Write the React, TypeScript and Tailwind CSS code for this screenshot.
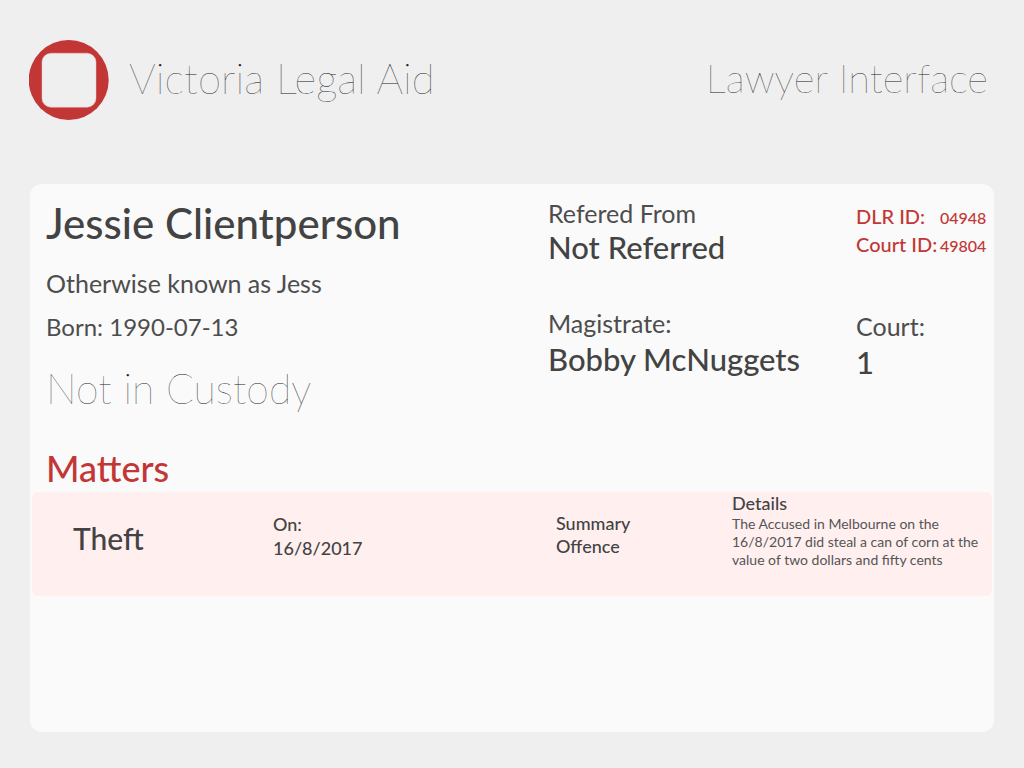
import React from "react";

const matters = [
  {
    charge: "Theft",
    date: "16/8/2017",
    kind: "Summary Offence",
    details:
      "The Accused in Melbourne on the 16/8/2017 did steal a can of corn at the value of two dollars and fifty cents",
  },
];

function Logo() {
  return (
    <svg viewBox="0 0 80 80" className="size-20 shrink-0" aria-hidden="true">
      <circle cx="39.7" cy="40" r="40" fill="#c23735" />
      <rect x="13" y="13.2" width="54" height="54" rx="9" fill="#efefef" stroke="#f3c4c4" strokeWidth="0.5" />
    </svg>
  );
}

export default function App() {
  return (
    <div className="min-h-screen bg-[#efefef] pt-10 pr-7 pb-9 pl-[29px] font-['Lato','Liberation_Sans',sans-serif] text-[#434343] antialiased">
      <header className="flex items-center justify-between pr-2">
        <div className="flex items-center gap-5">
          <Logo />
          <h1 className="pb-1 text-[42px] leading-12 font-extralight text-[#222222]">Victoria Legal Aid</h1>
        </div>
        <p className="pb-1 text-[40px] leading-12 font-extralight text-[#222222]">Lawyer Interface</p>
      </header>

      <main className="mt-16 mr-0.5 ml-px min-h-[548px] rounded-xl bg-[#fafafa] px-0.5 pt-[15px]">
        <section className="grid grid-cols-[502fr_308fr_134fr] pr-0.5 pl-3.5">
          <div>
            <h2 className="text-[42px] leading-12 font-medium">Jessie Clientperson</h2>
            <p className="mt-5 text-[25px] leading-8 text-[#4d4d4d]">Otherwise known as Jess</p>
            <p className="mt-3 text-2xl leading-8 text-[#4d4d4d]">Born: 1990-07-13</p>
            <p className="mt-[22px] text-[41px] leading-12 font-extralight text-[#222222]">Not in Custody</p>
          </div>
          <div className="-mt-0.5">
            <p className="text-[25px] leading-8 text-[#4d4d4d]">Refered From</p>
            <p className="text-[31px] leading-9 font-medium">Not Referred</p>
            <p className="mt-[42px] text-[25px] leading-8 text-[#4d4d4d]">Magistrate:</p>
            <p className="mt-0.5 text-[31px] leading-9 font-medium">Bobby McNuggets</p>
          </div>
          <div>
            <dl className="grid grid-cols-[84px_auto] items-baseline pt-1 font-medium text-[#c23735]">
              <dt className="text-xl leading-[27px]">DLR ID:</dt>
              <dd className="text-base leading-[27px]">04948</dd>
              <dt className="text-xl leading-[27px]">Court ID:</dt>
              <dd className="text-base leading-[27px]">49804</dd>
            </dl>
            <p className="mt-[51px] text-[25px] leading-8 text-[#4d4d4d]">Court:</p>
            <p className="mt-0.5 text-[31px] leading-9 font-medium">1</p>
          </div>
        </section>

        <section className="mt-[31px]">
          <h2 className="pl-3.5 text-4xl leading-12 font-medium text-[#c23735]">Matters</h2>
          {matters.map((matter) => (
            <article
              key={matter.charge}
              className="grid min-h-[104px] grid-cols-[200fr_283fr_176fr_260fr] rounded-md bg-[#ffefef] pl-[41px]"
            >
              <h3 className="pt-[26px] text-3xl leading-10 font-medium">{matter.charge}</h3>
              <p className="pt-5 text-lg leading-6 font-medium">
                On:
                <br />
                {matter.date}
              </p>
              <p className="w-24 pt-5 text-lg leading-[23px] font-medium">{matter.kind}</p>
              <div>
                <h4 className="text-lg leading-[23px] font-medium">Details</h4>
                <p className="text-sm leading-[18px] text-[#555555]">{matter.details}</p>
              </div>
            </article>
          ))}
        </section>
      </main>
    </div>
  );
}
